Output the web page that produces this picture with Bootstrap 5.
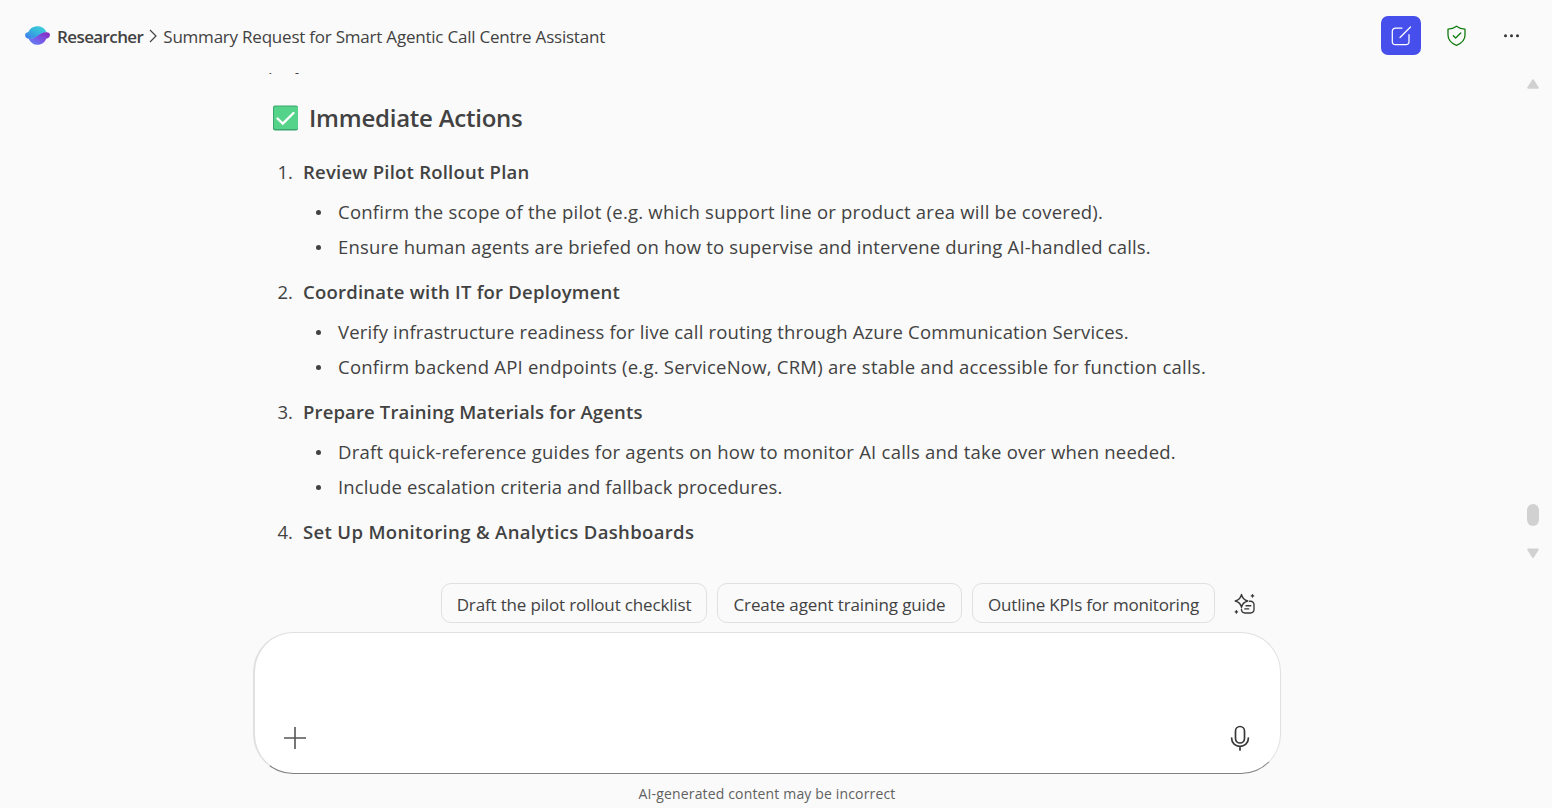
<!DOCTYPE html>
<html lang="en">
<head>
<meta charset="utf-8">
<title>Researcher</title>
<meta name="viewport" content="width=device-width, initial-scale=1">
<link href="https://cdn.jsdelivr.net/npm/bootstrap@5.3.0/dist/css/bootstrap.min.css" rel="stylesheet">
<style>
body{background:#fafafa;color:#424242;font-family:"Open Sans","Noto Sans",sans-serif;height:808px}
.topbar{height:73px;padding:0 19px 1px 25px}
.crumb{font-size:17px;line-height:24px}
.crumb-logo{margin-right:7px}
.crumb-app{letter-spacing:-.6px;padding-top:1px}
.crumb-title{letter-spacing:-.22px;padding-top:1px}
.compose{width:40px;height:39px;background:#464feb;border-radius:7px;margin-top:-1px}
.thread{height:490px}
.prose{margin-left:268px;width:1000px;font-size:18.5px}
.tail-line{height:24px;line-height:24px;margin-top:-22px;letter-spacing:.3px}
.prose h2{font-size:24px;line-height:32px;margin:27px 0 23px 4px;gap:10px;letter-spacing:-.24px}
.step{margin-bottom:15px}
.step-head,.step-item{line-height:30px;height:30px;white-space:nowrap}
.step-num{width:35px;padding-left:9.5px}
.step-item{margin-top:5px;padding-left:48px}
.step-head + .step-item{margin-top:10px}
.dot{width:5px;height:5px;border-radius:50%;background:#424242;margin-right:17px}
.ls-a{letter-spacing:.14px}
.ls-b{letter-spacing:.16px}
.ls-c{letter-spacing:.17px}
.ls-d{letter-spacing:.23px}
.ls-e{letter-spacing:.34px}
.rail{width:38px;padding:5px 0 4px}
.thumb{width:12px;height:22px;border-radius:6px;background:#d1d1d1;margin-top:415px;margin-bottom:22px}
.chips{height:40px;margin:20px 0 9px 441px;gap:10px}
.chip{height:40px;border:1px solid #e0e0e0;border-radius:10px;font-size:17px;line-height:24px;color:#424242;letter-spacing:-.16px;white-space:nowrap;padding:3px 0 0}
.chip-a{width:266px}
.chip-b{width:245px;letter-spacing:-.12px}
.chip-c{width:243px;letter-spacing:-.18px}
.more-prompts{margin:2px 0 0 8px}
.composer{width:1028px;height:142px;margin-left:253px;border:1px solid #e0e0e0;border-left-width:2px;border-bottom-color:#808080;border-radius:40px;background:#fff;padding:0 28px 22px}
.add{margin-bottom:1px}
.note{font-size:14px;line-height:20px;color:#616161;letter-spacing:.155px;margin-top:10px;width:1534px}
</style>
</head>
<body class="overflow-hidden d-flex flex-column">
<header class="topbar d-flex align-items-center justify-content-between flex-shrink-0">
  <nav class="crumb d-flex align-items-center">
    <svg width="25" height="20" viewBox="0 0 25 20" class="crumb-logo">
      <defs>
        <linearGradient id="sky" x1="0" y1="1" x2="1" y2="0"><stop stop-color="#3f76ee"/><stop offset=".55" stop-color="#36b7dc"/><stop offset="1" stop-color="#45d5dd"/></linearGradient>
        <linearGradient id="dusk" x1="0" y1="1" x2="1" y2="0"><stop stop-color="#5b8cf5"/><stop offset=".45" stop-color="#7758e8"/><stop offset="1" stop-color="#8a25b8"/></linearGradient>
      </defs>
      <path fill="url(#sky)" d="M3.400 6C5 2.400 8.500.3 12.500.3c4.500 0 7.900 2.700 9.100 6.200-7 0-8 6.500-17 6.500C1.500 13 .1 11 .1 9.300.1 7.500 1.400 6.300 3.400 6z"/>
      <path fill="url(#dusk)" d="M21.600 6.300c2.200.2 3.400 1.200 3.400 2.700 0 1.900-1.600 3.500-3.800 3.800-1.400 3.700-4.600 6-8.600 6-3.900 0-7.200-2.300-8.700-5.800C13 13 14 6 21.600 6.300z"/>
    </svg>
    <span class="crumb-app fw-semibold">Researcher</span>
    <svg width="20" height="20" viewBox="0 0 20 20" fill="none" stroke="#424242" stroke-width="1.200"><path d="M7 4l6 6-6 6"/></svg>
    <span class="crumb-title">Summary Request for Smart Agentic Call Centre Assistant</span>
  </nav>
  <div class="d-flex align-items-center">
    <button class="compose border-0 p-0 d-flex align-items-center justify-content-center" aria-label="New chat">
      <svg width="22" height="22" viewBox="0 0 22 22" fill="none" stroke="#fff" stroke-width="1.250" stroke-linecap="round"><path d="M12 3H5.500A3.200 3.200 0 0 0 2.300 6.200v10.300a3.200 3.200 0 0 0 3.200 3.200h10.300a3.200 3.200 0 0 0 3.200-3.200V9.500M10 12.500L20.500 2"/></svg>
    </button>
    <svg class="ms-4" width="24" height="24" viewBox="0 0 24 24" fill="none" stroke="#107c10" stroke-width="1.300" stroke-linecap="round" stroke-linejoin="round"><path d="M11.500 2.200C14 4.200 16.500 5 20 5.100v6c0 4.800-3 8.200-8.500 10.300C6 19.300 3 15.900 3 11.100v-6c3.500-.1 6-.9 8.500-2.900zM8.300 11.700l2.300 2.300L15.800 9"/></svg>
    <svg class="ms-4" width="40" height="24" viewBox="0 0 40 24" fill="#333"><circle cx="12.500" cy="11.700" r="1.500"/><circle cx="18.500" cy="11.700" r="1.500"/><circle cx="24.500" cy="11.700" r="1.500"/></svg>
  </div>
</header>
<main class="thread d-flex justify-content-between overflow-hidden flex-shrink-0">
  <section class="prose">
    <div class="tail-line">play</div>
    <h2 class="d-flex align-items-center fw-semibold">
      <svg width="27" height="26" viewBox="0 0 27 26"><rect x="1" y=".5" width="25" height="25" rx="2" fill="#3aa56c"/><rect x="2" y="1.500" width="24" height="22.500" rx="1.500" fill="#55d38a"/><path d="M5.500 13.500l5.300 5L21.500 8" fill="none" stroke="#fff" stroke-width="2.400" stroke-linecap="round"/></svg>
      <span>Immediate Actions</span>
    </h2>
    <div class="step">
      <div class="step-head d-flex"><span class="step-num">1.</span><span class="fw-semibold ls-d">Review Pilot Rollout Plan</span></div>
      <div class="step-item d-flex align-items-center"><i class="dot"></i><span class="ls-d">Confirm the scope of the pilot (e.g. which support line or product area will be covered).</span></div>
      <div class="step-item d-flex align-items-center"><i class="dot"></i><span class="ls-c">Ensure human agents are briefed on how to supervise and intervene during AI-handled calls.</span></div>
    </div>
    <div class="step">
      <div class="step-head d-flex"><span class="step-num">2.</span><span class="fw-semibold ls-d">Coordinate with IT for Deployment</span></div>
      <div class="step-item d-flex align-items-center"><i class="dot"></i><span class="ls-b">Verify infrastructure readiness for live call routing through Azure Communication Services.</span></div>
      <div class="step-item d-flex align-items-center"><i class="dot"></i><span class="ls-d">Confirm backend API endpoints (e.g. ServiceNow, CRM) are stable and accessible for function calls.</span></div>
    </div>
    <div class="step">
      <div class="step-head d-flex"><span class="step-num">3.</span><span class="fw-semibold ls-a">Prepare Training Materials for Agents</span></div>
      <div class="step-item d-flex align-items-center"><i class="dot"></i><span class="ls-d">Draft quick-reference guides for agents on how to monitor AI calls and take over when needed.</span></div>
      <div class="step-item d-flex align-items-center"><i class="dot"></i><span class="ls-a">Include escalation criteria and fallback procedures.</span></div>
    </div>
    <div class="step">
      <div class="step-head d-flex"><span class="step-num">4.</span><span class="fw-semibold ls-e">Set Up Monitoring &amp; Analytics Dashboards</span></div>
    </div>
  </section>
  <div class="rail d-flex flex-column align-items-center">
    <svg width="14" height="11" viewBox="0 0 14 11"><path d="M7 2.200L11.800 9.800H2.200z" fill="#d1d1d1" stroke="#d1d1d1" stroke-width="2" stroke-linejoin="round"/></svg>
    <div class="thumb flex-shrink-0"></div>
    <svg width="14" height="11" viewBox="0 0 14 11"><path d="M7 9L11.800 1.500H2.200z" fill="#d1d1d1" stroke="#d1d1d1" stroke-width="2" stroke-linejoin="round"/></svg>
  </div>
</main>
<div class="chips d-flex flex-shrink-0 align-items-center">
  <button class="chip chip-a bg-transparent">Draft the pilot rollout checklist</button>
  <button class="chip chip-b bg-transparent">Create agent training guide</button>
  <button class="chip chip-c bg-transparent">Outline KPIs for monitoring</button>
  <svg class="more-prompts" width="24" height="24" viewBox="0 0 24 24" fill="none" stroke="#383838" stroke-width="1.350" stroke-linecap="round" stroke-linejoin="round">
    <path d="M8.500 2.500c.9 4.100 2.300 5.600 6.300 6.500-4 .9-5.400 2.400-6.300 6.300C7.600 11.400 6.200 9.900 2.200 9c4-.9 5.400-2.400 6.300-6.500z"/>
    <path d="M16.500 9.200h1.200a3.300 3.300 0 0 1 3.300 3.300v5.200a3.300 3.300 0 0 1-3.300 3.300h-5.900a3.300 3.300 0 0 1-3.300-3.300v-.5M13 13.700h4.800M11.800 16.900h3.900M19.500 2.700v2.400M18.300 3.900h2.400M3.400 18.600v2.400M2.200 19.800h2.400"/>
  </svg>
</div>
<div class="composer d-flex align-items-end justify-content-between flex-shrink-0">
  <svg class="add" width="24" height="24" viewBox="0 0 24 24" stroke="#555" stroke-width="1.600"><path d="M12 1v22M1 12h22"/></svg>
  <svg width="24" height="26" viewBox="0 0 24 26" fill="none" stroke="#383838" stroke-width="1.700" stroke-linecap="round"><rect x="7.500" y="1.500" width="9" height="16.500" rx="4.500"/><path d="M3.700 13v.7a8.300 7.600 0 0 0 16.600 0V13M12 21.500v3.500"/></svg>
</div>
<div class="note text-center">AI-generated content may be incorrect</div>
<script src="https://cdn.jsdelivr.net/npm/bootstrap@5.3.0/dist/js/bootstrap.bundle.min.js"></script>
</body>
</html>
